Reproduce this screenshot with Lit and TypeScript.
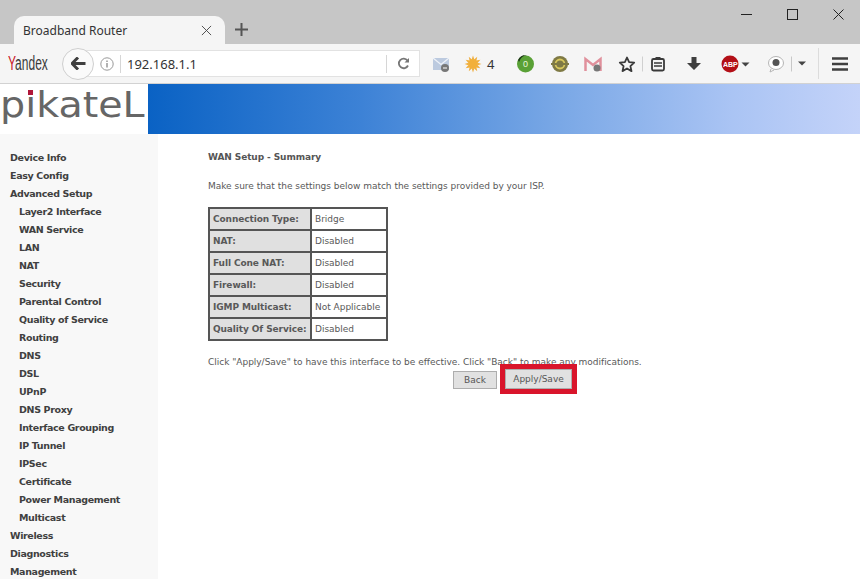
import { LitElement, html, css, svg } from "lit";
import { customElement } from "lit/decorators.js";

const top = ["Device Info", "Easy Config", "Advanced Setup"];
const sub = ["Layer2 Interface", "WAN Service", "LAN", "NAT", "Security", "Parental Control", "Quality of Service", "Routing", "DNS", "DSL", "UPnP", "DNS Proxy", "Interface Grouping", "IP Tunnel", "IPSec", "Certificate", "Power Management", "Multicast"];
const bottom = ["Wireless", "Diagnostics", "Management"];
const rows = [["Connection Type:", "Bridge"], ["NAT:", "Disabled"], ["Full Cone NAT:", "Disabled"], ["Firewall:", "Disabled"], ["IGMP Multicast:", "Not Applicable"], ["Quality Of Service:", "Disabled"]];

@customElement("app-root")
export class AppRoot extends LitElement {
  static styles = css`
    :host { display: block; width: 860px; height: 579px; overflow: hidden; background: #fff; font-family: "DejaVu Sans", sans-serif; }
    .titlebar { height: 44px; background: #c6c6c6; display: flex; align-items: flex-end; }
    .tab { margin-left: 14px; width: 211px; height: 28px; background: #f5f5f5; border-radius: 10px 10px 0 0; display: flex; align-items: center; justify-content: space-between; padding: 0 13px 0 9px; box-sizing: border-box; font: 12px "Noto Sans", sans-serif; color: #333; }
    .plus { margin: 0 0 8px 10px; display: block; }
    .winbtns { margin-left: auto; align-self: flex-start; display: flex; gap: 35px; padding: 9px 16px 0 0; }
    .winbtns svg { display: block; }
    .toolbar { height: 39px; background: #f5f5f5; border-bottom: 1px solid #d2d2d2; display: flex; align-items: center; }
    .yandex { width: 62px; flex: none; padding-left: 8px; box-sizing: border-box; font: 20px "Liberation Sans", sans-serif; color: #3a3a3a; white-space: nowrap; overflow: visible; }
    .yandex span { display: inline-block; transform: scaleX(.6); transform-origin: 0 50%; }
    .yandex b { color: #c8202a; font-weight: 400; }
    .back { width: 32px; height: 32px; border-radius: 50%; background: #fafafa; border: 1px solid #cfcfcf; box-sizing: border-box; display: flex; align-items: center; justify-content: center; margin-right: -9px; position: relative; z-index: 1; flex: none; }
    .url { width: 335px; flex: none; height: 27px; background: #fff; border: 1px solid #e2e2e2; box-sizing: border-box; display: flex; align-items: center; padding-left: 14px; font: 13px "Noto Sans", sans-serif; color: #333; }
    .url .sep { width: 1px; height: 18px; background: #d6d6d6; }
    .url .addr { flex: 1; padding-left: 6px; }
    .url .info { margin-right: 6px; display: block; }
    .url .reload { width: 32px; display: flex; justify-content: center; }
    .tools { flex: 1; height: 39px; }
    .tools svg { width: 100%; height: 100%; display: block; }
    .tools .num { font: 13px "Noto Sans", sans-serif; fill: #333; }
    .tools .abp { font: bold 7px "Liberation Sans", sans-serif; fill: #fff; }
    .tools .zero { font: 9px "Liberation Sans", sans-serif; fill: #e8f5d8; }
    .banner { height: 50px; display: flex; }
    .logo { width: 148px; flex: none; background: #fff; font: 400 36px/42px "DejaVu Sans", sans-serif; color: #666; position: relative; overflow: hidden; white-space: nowrap; }
    .logo .word { display: block; width: 132px; transform: scaleX(1.1); transform-origin: 0 0; }
    .logo .end { text-transform: uppercase; }
    .logo i { position: absolute; left: 28px; top: 6px; width: 5px; height: 5px; background: #b0173a; }
    .grad { flex: 1; background: linear-gradient(90deg, #0a62c4 0%, #3d82d6 30%, #7aa8e6 58%, #aac4f4 82%, #c4d3f9 100%); }
    .main { display: flex; height: 445px; }
    .side { width: 158px; background: #f8f8f8; padding-top: 15px; box-sizing: border-box; overflow: hidden; flex: none; }
    .side a { display: block; height: 18px; line-height: 18px; padding-left: 10px; font-size: 9.5px; font-weight: 700; color: #404040; letter-spacing: -.35px; white-space: nowrap; }
    .side a.s { padding-left: 19px; }
    .content { padding: 17px 0 0 50px; font-size: 9px; color: #595959; letter-spacing: -.02px; flex: 1; }
    h1 { font-size: 9px; font-weight: 700; margin: 0 0 17px; line-height: 12px; color: #555; letter-spacing: -.1px; }
    p { margin: 0; line-height: 12px; }
    table { border-collapse: collapse; margin: 15px 0 15px 0; border: 2px solid #555; }
    td { height: 22px; padding: 0 0 0 3px; border: 2px solid #555; box-sizing: border-box; }
    td:first-child { background: #e0e0e0; font-weight: 700; width: 102px; padding-left: 3px; white-space: nowrap; letter-spacing: -.1px; }
    td:last-child { width: 76px; white-space: nowrap; }
    .btns { display: flex; align-items: flex-end; margin: 1px 0 0 245px; }
    button { font: inherit; height: 18px; padding: 0; background: #e1e1e1; border: 1px solid #adadad; color: #555; }
    .b1 { width: 44px; margin-right: 8px; }
    .b2 { width: 67px; height: 20px; outline: 5px solid #d9152b; position: relative; z-index: 1; }
  `;

  private closeX(size: number, stroke: string) {
    return html`<svg width=${size} height=${size} viewBox="0 0 12 12"><path d="M1 1L11 11M11 1L1 11" stroke=${stroke} stroke-width="1" fill="none"/></svg>`;
  }

  private tools() {
    const sun = [0, 30, 60, 90, 120, 150, 180, 210, 240, 270, 300, 330].map(a => svg`<path d="M473 55.500l1.300 4h-2.600z" fill="#efae3e" transform="rotate(${a} 473 64)"/>`);
    return svg`<svg viewBox="420 44 440 39">
      <rect x="433" y="58" width="16" height="12" fill="#bccadf"/><path d="M433 58l8 6.500 8-6.500" fill="none" stroke="#eef2f8" stroke-width="1.200"/>
      <circle cx="445" cy="68" r="4" fill="#777"/><path d="M443 68h4" stroke="#fff"/>
      ${sun}<circle cx="473" cy="64" r="5" fill="#f2b03a"/>
      <text class="num" x="487" y="69">4</text>
      <circle cx="525.500" cy="64" r="8.500" fill="#5aa136"/><path d="M518 60a9 9 0 0 1 9-5q-6 1-8 7z" fill="#1f3b18"/>
      <text class="zero" x="523" y="67">0</text>
      <circle cx="560" cy="64" r="8" fill="#7f7a45"/><circle cx="560" cy="64" r="4.500" fill="none" stroke="#d8c85c" stroke-width="1.800"/><path d="M551 64h18" stroke="#7f7a45" stroke-width="2"/>
      <path d="M585.500 71v-12l7.500 6 7.500-6v12" fill="none" stroke="#e0909c" stroke-width="2.500"/><circle cx="597" cy="68" r="3.500" fill="#777"/>
      <path d="M627 57.500l2.100 4.700 5.100.5-3.800 3.400 1.100 5-4.500-2.600-4.500 2.600 1.100-5-3.800-3.400 5.100-.5z" fill="none" stroke="#3a3a3a" stroke-width="1.800" stroke-linejoin="round"/>
      <path d="M642.500 56.500v15" stroke="#d0d0d0"/>
      <rect x="652" y="59" width="12" height="11.500" rx="1.500" fill="none" stroke="#3a3a3a" stroke-width="1.800"/><rect x="655.500" y="57" width="5" height="3" fill="#3a3a3a"/>
      <path d="M654 63h8M654 66h8" stroke="#3a3a3a" stroke-width="1.500"/>
      <path d="M691.500 57h5v6h4.500l-7 7-7-7h4.500z" fill="#3f3f3f"/>
      <circle cx="730" cy="64" r="8.500" fill="#b30f17"/>
      <text class="abp" x="723" y="66.500">ABP</text>
      <path d="M741.500 62.500h8l-4 4z" fill="#444"/>
      <ellipse cx="776" cy="63" rx="7.500" ry="6.500" fill="#fff" stroke="#b5b5b5"/><circle cx="776" cy="62.500" r="3.500" fill="#555"/><path d="M771 69l-1 3 4-2" fill="#fff" stroke="#b5b5b5"/>
      <path d="M791.500 56.500v15" stroke="#c8c8c8"/>
      <path d="M798 61.500h8l-4 4z" fill="#444"/>
      <path d="M818.500 48v31" stroke="#dcdcdc"/>
      <path d="M832 58.500h16M832 64h16M832 69.500h16" stroke="#3f3f3f" stroke-width="2.600"/>
    </svg>`;
  }

  render() {
    return html`
      <div class="titlebar">
        <div class="tab"><span>Broadband Router</span>${this.closeX(11, "#444")}</div>
        <svg class="plus" width="13" height="13" viewBox="0 0 13 13"><path d="M6.500 0v13M0 6.500h13" stroke="#555" stroke-width="2"/></svg>
        <div class="winbtns">
          <svg width="11" height="11" viewBox="0 0 11 11"><path d="M0 5.500h11" stroke="#222"/></svg>
          <svg width="11" height="11" viewBox="0 0 11 11"><rect x=".5" y=".5" width="10" height="10" fill="none" stroke="#222"/></svg>
          <svg width="11" height="11" viewBox="0 0 11 11"><path d="M.5 .5L10.500 10.500M10.500 .5L.5 10.500" stroke="#222" fill="none"/></svg>
        </div>
      </div>
      <div class="toolbar">
        <div class="yandex"><span><b>Y</b>andex</span></div>
        <div class="back"><svg width="15" height="13" viewBox="0 0 15 13"><path d="M7 0.500L1 6.500l6 6M1.500 6.500H14.500" fill="none" stroke="#3f3f3f" stroke-width="3"/></svg></div>
        <div class="url">
          <svg class="info" width="14" height="14" viewBox="0 0 14 14"><circle cx="7" cy="7" r="6.200" fill="none" stroke="#999"/><path d="M7 6v4.500M7 3.500v1.500" stroke="#888" stroke-width="1.300"/></svg>
          <span class="sep"></span>
          <span class="addr">192.168.1.1</span>
          <span class="sep"></span>
          <span class="reload"><svg width="13" height="13" viewBox="0 0 13 13"><path d="M11 8.500A4.800 4.800 0 1 1 10.500 3.500" fill="none" stroke="#777" stroke-width="1.800"/><path d="M12 1v4.500H7.500z" fill="#777"/></svg></span>
        </div>
        <div class="tools">${this.tools()}</div>
      </div>
      <div class="banner">
        <div class="logo"><span class="word">pikate<span class="end">l</span></span><i></i></div>
        <div class="grad"></div>
      </div>
      <div class="main">
        <nav class="side">
          ${top.map(t => html`<a>${t}</a>`)}
          ${sub.map(t => html`<a class="s">${t}</a>`)}
          ${bottom.map(t => html`<a>${t}</a>`)}
        </nav>
        <div class="content">
          <h1>WAN Setup - Summary</h1>
          <p>Make sure that the settings below match the settings provided by your ISP.</p>
          <table>${rows.map(r => html`<tr><td>${r[0]}</td><td>${r[1]}</td></tr>`)}</table>
          <p>Click "Apply/Save" to have this interface to be effective. Click "Back" to make any modifications.</p>
          <div class="btns"><button class="b1">Back</button><button class="b2">Apply/Save</button></div>
        </div>
      </div>
    `;
  }
}
